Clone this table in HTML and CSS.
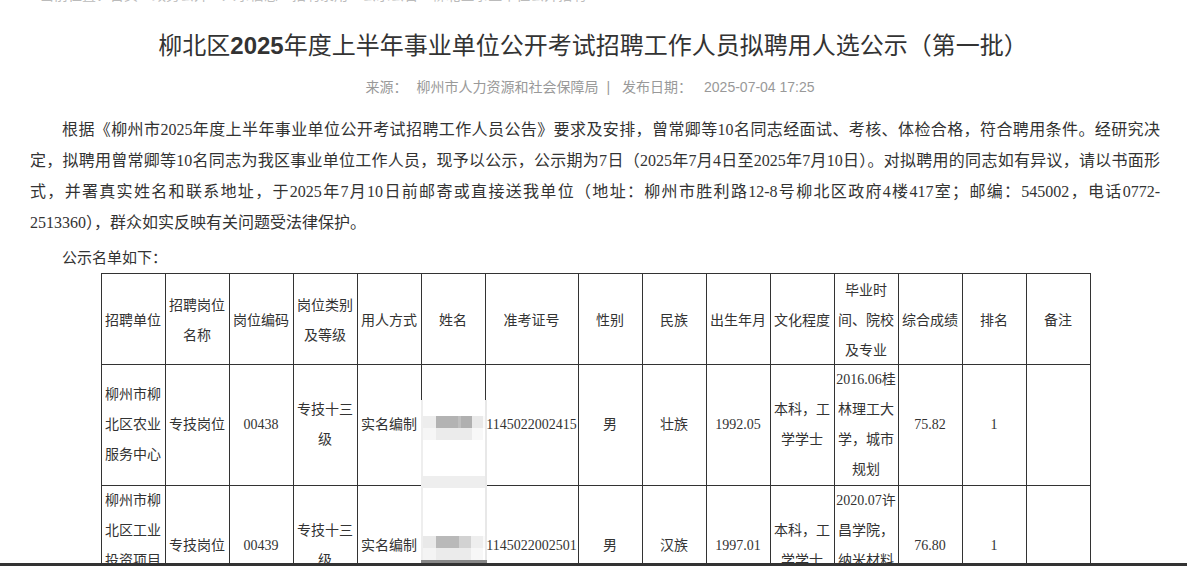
FILE: index.html
```html
<!DOCTYPE html>
<html lang="zh-CN">
<head>
<meta charset="utf-8">
<title>柳北区2025年度上半年事业单位公开考试招聘工作人员拟聘用人选公示（第一批）</title>
<link rel="stylesheet" href="styles.css">
</head>
<body>
<div class="crumb"><div class="crumb-text">当前位置：首页 &gt; 政务公开 &gt; 人事信息 &gt; 招聘录用 &gt; 公示公告 &gt; 柳北区事业单位公开招聘</div></div>
<div class="article">
  <h1 class="title">柳北区<span class="title-year">2025</span>年度上半年事业单位公开考试招聘工作人员拟聘用人选公示（第一批）</h1>
  <div class="meta"><span>来源：</span><span class="meta-src">柳州市人力资源和社会保障局</span><span class="sep">|</span><span>发布日期：</span><span class="meta-date">2025-07-04 17:25</span></div>
  <div class="content">
    <p class="para"><span class="line first">根据《柳州市2025年度上半年事业单位公开考试招聘工作人员公告》要求及安排，曾常卿等10名同志经面试、考核、体检合格，符合聘用条件。经研究决</span><span class="line">定，拟聘用曾常卿等10名同志为我区事业单位工作人员，现予以公示，公示期为7日（2025年7月4日至2025年7月10日）。对拟聘用的同志如有异议，请以书面形</span><span class="line">式，并署真实姓名和联系地址，于2025年7月10日前邮寄或直接送我单位（地址：柳州市胜利路12-8号柳北区政府4楼417室；邮编：545002，电话0772-</span>2513360），群众如实反映有关问题受法律保护。</p>
    <p class="list-intro">公示名单如下：</p>
    <div class="table-wrap">
      <table class="roster">
        <colgroup>
          <col><col><col><col><col><col><col class="col-wide"><col><col><col><col><col><col><col><col>
        </colgroup>
        <thead>
          <tr>
            <th>招聘单位</th><th>招聘岗位名称</th><th>岗位编码</th><th>岗位类别及等级</th><th>用人方式</th><th>姓名</th><th>准考证号</th><th>性别</th><th>民族</th><th>出生年月</th><th>文化程度</th><th>毕业时间、院校及专业</th><th>综合成绩</th><th>排名</th><th>备注</th>
          </tr>
        </thead>
        <tbody>
          <tr>
            <td>柳州市柳北区农业服务中心</td><td>专技岗位</td><td>00438</td><td>专技十三级</td><td>实名编制</td><td></td><td>1145022002415</td><td>男</td><td>壮族</td><td>1992.05</td><td>本科，工学学士</td><td>2016.06桂林理工大学，城市规划</td><td>75.82</td><td>1</td><td></td>
          </tr>
          <tr>
            <td>柳州市柳北区工业投资项目服务中心</td><td>专技岗位</td><td>00439</td><td>专技十三级</td><td>实名编制</td><td></td><td>1145022002501</td><td>男</td><td>汉族</td><td>1997.01</td><td>本科，工学学士</td><td>2020.07许昌学院，纳米材料与技术</td><td>76.80</td><td>1</td><td></td>
          </tr>
        </tbody>
      </table>
      <div class="blur">
        <div class="blur-gap g16"></div>
        <div class="blur-row dark1"></div>
        <div class="blur-row pale1"></div>
        <div class="blur-gap g36"></div>
        <div class="blur-row band"></div>
        <div class="blur-gap g48"></div>
        <div class="blur-row dark2"></div>
        <div class="blur-row pale2"></div>
        <div class="blur-edge"></div>
      </div>
    </div>
  </div>
</div>
<div class="bottom-bar"></div>
</body>
</html>
```

FILE: styles.css
```css
html, body {
  margin: 0;
  padding: 0;
  background: #fff;
  color: #333;
}

.crumb {
  height: 3px;
  overflow: hidden;
}

.crumb-text {
  margin: -16px 0 0 40px;
  font: 14px/20px "Noto Sans CJK SC", sans-serif;
  color: #bbb;
  white-space: nowrap;
}

.article {
  width: 1130px;
  margin-left: 30px;
}

.title {
  margin: 25px 0 0;
  padding-right: 4px;
  font: 400 24px/36px "Liberation Sans", "Noto Sans CJK SC", sans-serif;
  text-align: center;
  color: #333;
}

.title-year {
  font-weight: 700;
}

.meta {
  margin-top: 13px;
  padding-right: 10px;
  font: 14px/20px "Liberation Sans", "Noto Sans CJK SC", sans-serif;
  color: #999;
  text-align: center;
}

.meta-src {
  margin-left: 9px;
}

.sep {
  margin: 0 12px 0 8px;
}

.meta-date {
  margin-left: 12px;
}

.content {
  margin-top: 17px;
}

.para {
  margin: 0;
  font: 16px/31px "Liberation Serif", "Noto Sans CJK SC", serif;
  color: #333;
}

.line {
  display: block;
  text-align: justify;
  text-align-last: justify;
}

.line.first {
  text-indent: 32px;
}

.list-intro {
  margin: 3px 0 0;
  padding-left: 32px;
  font: 15px/31px "Noto Sans CJK SC", sans-serif;
  color: #333;
}

.table-wrap {
  position: relative;
  width: 989px;
  margin: 1px auto 0;
}

.roster {
  width: 989px;
  border-collapse: collapse;
  table-layout: fixed;
  font: 14px/30px "Liberation Serif", "Noto Sans CJK SC", serif;
  color: #333;
}

.roster col {
  width: 64px;
}

.roster col.col-wide {
  width: 93px;
}

.roster th,
.roster td {
  border: 1px solid #333;
  padding: 0;
  text-align: center;
  vertical-align: middle;
  font-weight: normal;
  font-family: "Noto Sans CJK SC", sans-serif;
}

.roster td {
  font-family: "Liberation Serif", "Noto Sans CJK SC", serif;
}

.blur {
  position: absolute;
  left: 320px;
  top: 127px;
  width: 66px;
  height: 163px;
  box-sizing: border-box;
  background: #fff;
  border-left: 2px solid #eeeeee;
  border-right: 2px solid #e8e8e8;
  display: flex;
  flex-direction: column;
}

.blur-gap.g16 { height: 16px; }
.blur-gap.g36 { height: 36px; }
.blur-gap.g48 { height: 48px; }

.blur-row {
  height: 12px;
}

.blur-row.dark1 {
  background: linear-gradient(to right,
    #ededed 0 13px, #b3b3b3 13px 35px, #bfbfbf 35px 38px,
    #b0b0b0 38px 49px, #e9e9e9 49px 60px, #fafafa 60px);
}

.blur-row.pale1 {
  background: linear-gradient(to right,
    #f6f6f6 0 13px, #ebebeb 13px 49px, #f8f8f8 49px 60px, #fff 60px);
}

.blur-row.band {
  background: #eeeeee;
}

.blur-row.dark2 {
  background: linear-gradient(to right,
    #e9e9e9 0 13px, #b9b9b9 13px 36px, #d2d2d2 36px 48px,
    #eeeeee 48px 60px, #fafafa 60px);
}

.blur-row.pale2 {
  background: linear-gradient(to right,
    #f4f4f4 0 13px, #ebebeb 13px 48px, #f7f7f7 48px 60px, #fff 60px);
}

.blur-edge {
  height: 3px;
  margin: 0 -2px;
  background: #888;
}

.bottom-bar {
  position: fixed;
  left: 0;
  right: 0;
  bottom: 0;
  height: 3px;
  background: #333;
}
```
